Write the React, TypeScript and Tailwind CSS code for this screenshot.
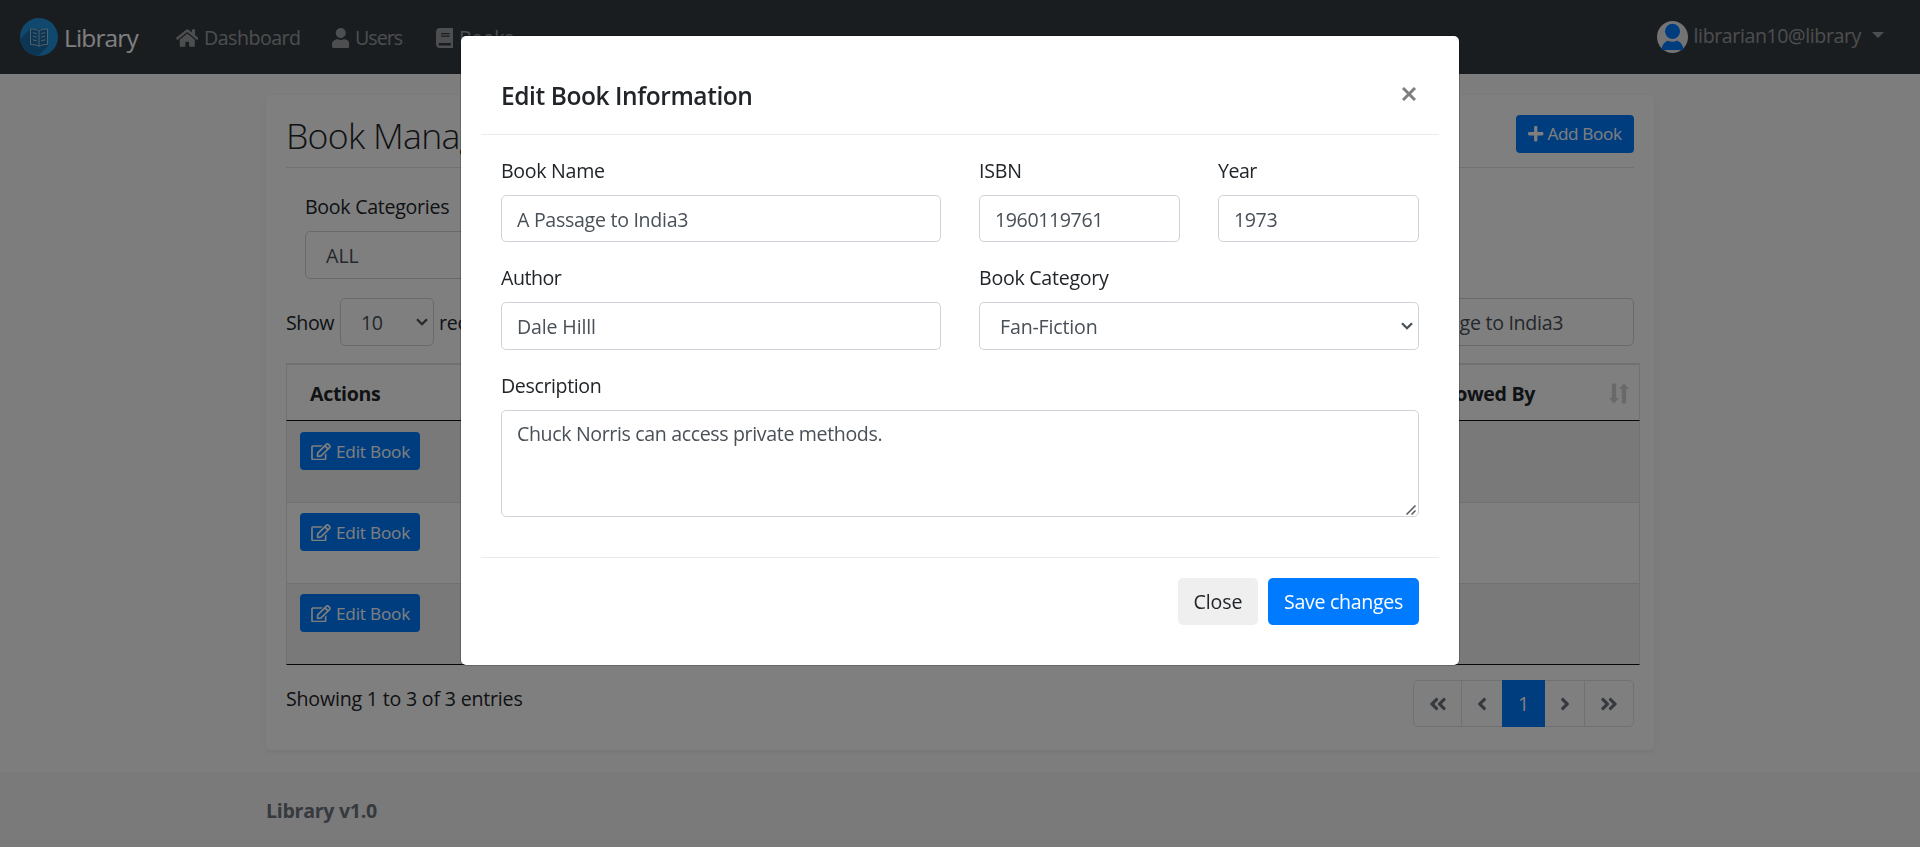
import React from "react";
import {
  FaHome,
  FaUser,
  FaBook,
  FaRegEdit,
  FaPlus,
  FaAngleDoubleLeft,
  FaAngleLeft,
  FaAngleRight,
  FaAngleDoubleRight,
} from "react-icons/fa";

function Chevron() {
  return (
    <svg width="12" height="8" viewBox="0 0 12 8" className="shrink-0">
      <path d="M1 1.2 L6 6.2 L11 1.2" fill="none" stroke="#495057" strokeWidth="2.3" />
    </svg>
  );
}

function Logo() {
  return (
    <svg width="38" height="38" viewBox="0 0 38 38" className="shrink-0">
      <defs>
        <clipPath id="disc">
          <circle cx="19" cy="19" r="19" />
        </clipPath>
      </defs>
      <circle cx="19" cy="19" r="19" fill="#2090dc" />
      <path d="M10 11 L-4 25 L14 42 L28 28 L28 11 Z" fill="#1a6cab" clipPath="url(#disc)" />
      <g fill="none" stroke="#9cc4e0" strokeWidth="1">
        <path d="M10.5 11 V26.5 C13.5 26.5 17 26.8 19 28.4 C21 26.8 24.5 26.5 27.5 26.5 V11 C24.5 11 21 11.4 19 13 C17 11.4 13.5 11 10.5 11 Z" />
        <path d="M19 13 V28" />
        <path d="M12.8 14.6 L16.8 15.6 M12.8 18.2 L16.8 19.2 M12.8 21.8 L16.8 22.8 M21.2 15.6 L25.2 14.6 M21.2 19.2 L25.2 18.2 M21.2 22.8 L25.2 21.8" />
      </g>
    </svg>
  );
}

function Avatar() {
  return (
    <svg width="31" height="32" viewBox="0 0 31 32" className="shrink-0">
      <ellipse cx="15.5" cy="16" rx="15.5" ry="16" fill="#e6e6e6" />
      <circle cx="15.5" cy="10.3" r="8.4" fill="#f4f4f4" />
      <circle cx="15.5" cy="10.3" r="7.6" fill="#007bff" />
      <path d="M4.3 29 C5.3 23.5 8 20.3 11 19.8 C14 21 17 21 20 19.8 C23 20.3 25.7 23.5 26.7 29 Z" fill="#007bff" />
    </svg>
  );
}

function SortIcon() {
  return (
    <svg width="20" height="21" viewBox="0 0 20 21" className="shrink-0" fill="#d2d2d2">
      <path d="M2.8 0.5 H7.2 V15 H10 L5 20.5 L0 15 H2.8 Z" />
      <path d="M12.8 20.5 H17.2 V6 H20 L15 0.5 L10 6 H12.8 Z" />
    </svg>
  );
}

const field =
  "h-[47.5px] w-full rounded-[5px] border border-[#ced4da] bg-white px-[15px] pt-[2px] text-[#495057] outline-none";
const label = "mb-2.5 block h-[30px] leading-[32px]";

function Navbar() {
  return (
    <nav className="flex h-[74px] items-center bg-[#343a40] pl-5 text-white/50">
      <Logo />
      <span className="ml-[6px] w-[79px] text-[24.5px] leading-[37px] tracking-[-0.85px] text-white">Library</span>
      <a className="ml-[32.5px] flex w-[156px] items-center pt-[1px] tracking-[-0.51px]">
        <FaHome className="mr-[6px] h-5 w-[22.5px]" />
        Dashboard
      </a>
      <a className="flex w-[104px] items-center pt-[1px] tracking-[-0.95px]">
        <FaUser className="mr-[6px] h-5 w-[17.5px]" />
        Users
      </a>
      <a className="flex items-center pt-[1px] tracking-[-0.3px]">
        <FaBook className="mr-[6px] h-5 w-[17.5px]" />
        Books
      </a>
      <div className="ml-auto flex items-center pr-9">
        <Avatar />
        <span className="ml-[6px] pb-[3px] tracking-[-0.41px]">librarian10@library</span>
        <svg width="12" height="6" viewBox="0 0 12 6" className="mb-[5px] ml-[11px] fill-white/50">
          <path d="M0 0 H12 L6 6 Z" />
        </svg>
      </div>
    </nav>
  );
}

function Row({ first, odd, last }: { first?: boolean; odd?: boolean; last?: boolean }) {
  return (
    <div
      className={`border-x border-b px-[13px] ${first ? "h-[82px] pt-[11px]" : "h-[81px] pt-[10px]"} ${
        odd ? "bg-[#f2f2f2]" : "bg-white"
      } ${last ? "border-x-[#dee2e6] border-b-[#111]" : "border-[#dee2e6]"}`}
    >
      <button className="flex h-[38px] w-[120px] items-center rounded-[4px] bg-[#007bff] pl-[11px] pt-[1px] text-[17.2px] tracking-[-0.2px] text-white">
        <FaRegEdit className="mr-[5px] h-[17.5px] w-[20px]" />
        Edit Book
      </button>
    </div>
  );
}

function BookManagement() {
  return (
    <main className="mx-auto mt-[21px] h-[655px] w-[1388px] rounded-[5px] bg-white px-5 pt-5 shadow-[0_2px_5px_rgba(0,20,15,0.05)]">
      <header className="flex h-[53px] items-start justify-between border-b border-black/10">
        <h1 className="-mt-[2px] text-[35.6px] font-light leading-[45px] tracking-[-0.7px]">Book Management</h1>
        <button className="flex h-[38px] w-[118px] items-center rounded-[4px] bg-[#007bff] pl-[11px] text-[17.2px] tracking-[-0.38px] text-white">
          <FaPlus className="mr-[3px] size-[17.5px]" />
          Add Book
        </button>
      </header>
      <section className="ml-[19px] mt-[23px] w-[420px]">
        <span className="block h-[30px] leading-[32px] tracking-[-0.29px]">Book Categories</span>
        <div className="mt-2.5 flex h-[47.5px] items-center justify-between rounded-[5px] border border-[#ced4da] px-5 pt-[2px] text-[#495057]">
          ALL
          <Chevron />
        </div>
      </section>
      <section className="mt-[19.5px] flex h-12 items-center justify-between">
        <div className="flex items-center">
          <span className="w-[54px] pt-[2px] tracking-[-0.4px]">Show</span>
          <div className="mr-[5px] flex h-12 w-[94px] items-center justify-between rounded-[5px] border border-[#ced4da] pl-5 pr-[5px] tracking-[-0.5px] text-[#495057]">
            <span className="pt-[2px]">10</span>
            <Chevron />
          </div>
          <span className="pt-[2px] tracking-[-0.3px]">records</span>
        </div>
        <div className="flex items-center gap-2">
          <span>Search:</span>
          <div className="flex h-12 w-[258px] items-center rounded-[5px] border border-[#ced4da] pl-[15px] pt-[2px] tracking-[-0.3px] text-[#495057]">
            A Passage to India3
          </div>
        </div>
      </section>
      <section className="mt-[17px] w-[1354px]">
        <div className="flex h-[58px] items-center justify-between border-x border-b border-t-2 border-x-[#dee2e6] border-b-[#111] border-t-[#dee2e6] pl-[23px] pr-[10px] pt-[2px] font-bold">
          <span className="tracking-[-0.35px]">Actions</span>
          <div className="flex items-center">
            <span className="mr-[74px] tracking-[-0.35px]">Borrowed By</span>
            <SortIcon />
          </div>
        </div>
        <Row first odd />
        <Row />
        <Row odd last />
      </section>
      <section className="mt-[14.5px] flex items-start justify-between">
        <span className="pt-[4px] leading-[30px] tracking-[-0.2px]">Showing 1 to 3 of 3 entries</span>
        <div className="flex h-[47.5px] w-[221px] rounded-[5px] border border-[#dee2e6] text-[#6c757d]">
          <span className="flex w-[48px] items-center justify-center border-r border-[#dee2e6] pt-[2px]">
            <FaAngleDoubleLeft className="size-5" />
          </span>
          <span className="flex w-[40px] items-center justify-center pt-[2px]">
            <FaAngleLeft className="size-5" />
          </span>
          <span className="-my-px flex w-[43px] items-center justify-center bg-[#007bff] pt-[2px] text-white">1</span>
          <span className="flex w-[40px] items-center justify-center border-r border-[#dee2e6] pt-[2px]">
            <FaAngleRight className="size-5" />
          </span>
          <span className="flex w-[48px] items-center justify-center pt-[2px]">
            <FaAngleDoubleRight className="size-5" />
          </span>
        </div>
      </section>
    </main>
  );
}

function EditBookModal() {
  return (
    <div className="fixed inset-0 flex items-start justify-center bg-black/50 pt-[35px]">
      <div className="w-[1000px] rounded-[6px] border border-black/20 bg-white bg-clip-padding p-5">
        <div className="flex justify-between border-b border-[#e9ecef] p-5">
          <h5 className="h-[37.5px] pt-[1px] text-[24.5px] font-semibold leading-[37.5px] tracking-[-0.42px]">
            Edit Book Information
          </h5>
          <svg width="14" height="14" viewBox="0 0 14 14" className="mr-[3.5px] mt-[11px]">
            <path d="M1 1 L13 13 M13 1 L1 13" stroke="#7f7f7f" strokeWidth="3" />
          </svg>
        </div>
        <div className="flex flex-col gap-5 px-5 pb-10 pt-5">
          <div className="flex gap-[38px]">
            <div className="w-[440px]">
              <span className={`${label} tracking-[-0.3px]`}>Book Name</span>
              <input className={`${field} tracking-[-0.3px]`} defaultValue="A Passage to India3" />
            </div>
            <div className="w-[201px]">
              <span className={`${label} tracking-[-0.2px]`}>ISBN</span>
              <input className={`${field} tracking-[-0.4px]`} defaultValue="1960119761" />
            </div>
            <div className="w-[201px]">
              <span className={`${label} tracking-[-0.5px]`}>Year</span>
              <input className={`${field} tracking-[-0.4px]`} defaultValue="1973" />
            </div>
          </div>
          <div className="flex gap-[38px]">
            <div className="w-[440px]">
              <span className={`${label} tracking-[-0.5px]`}>Author</span>
              <input className={`${field} tracking-[-0.16px]`} defaultValue="Dale Hilll" />
            </div>
            <div className="w-[440px]">
              <span className={`${label} tracking-[-0.27px]`}>Book Category</span>
              <div className="flex h-[47.5px] items-center justify-between rounded-[5px] border border-[#ced4da] pl-[20px] pr-[5px] tracking-[-0.18px] text-[#495057]">
                <span className="pt-[2px]">Fan-Fiction</span>
                <Chevron />
              </div>
            </div>
          </div>
          <div>
            <span className={`${label} tracking-[-0.39px]`}>Description</span>
            <div className="relative">
              <textarea
                className="block h-[107.5px] w-full resize-none rounded-[5px] border border-[#ced4da] px-[15px] pb-[6px] pt-[8.5px] leading-[30px] tracking-[-0.37px] text-[#495057] outline-none"
                defaultValue="Chuck Norris can access private methods."
              />
              <svg width="10" height="10" viewBox="0 0 10 10" className="absolute bottom-[2.5px] right-[3px]">
                <path d="M0.5 9.5 L9.5 0.5 M5.5 9.5 L9.5 5.5" stroke="#55585b" strokeWidth="1.5" />
              </svg>
            </div>
          </div>
        </div>
        <div className="flex justify-end gap-2.5 border-t border-[#e9ecef] p-5">
          <button className="h-[47px] w-20 rounded-[5px] bg-[#efefef] tracking-[-0.1px]">Close</button>
          <button className="h-[47px] w-[151px] rounded-[5px] bg-[#007bff] font-medium tracking-[-0.31px] text-white">
            Save changes
          </button>
        </div>
      </div>
    </div>
  );
}

export default function App() {
  return (
    <div className="flex h-[847px] flex-col overflow-hidden bg-[#fafafa] font-['Open_Sans','Noto_Sans',sans-serif] text-[19.6px] leading-[30px] text-[#212529]">
      <Navbar />
      <BookManagement />
      <footer className="mt-[22px] flex-1 bg-[#f5f5f5] pl-[266px] pt-[24px] font-bold tracking-[-0.3px] text-[#6c757d]">
        Library v1.0
      </footer>
      <EditBookModal />
    </div>
  );
}
